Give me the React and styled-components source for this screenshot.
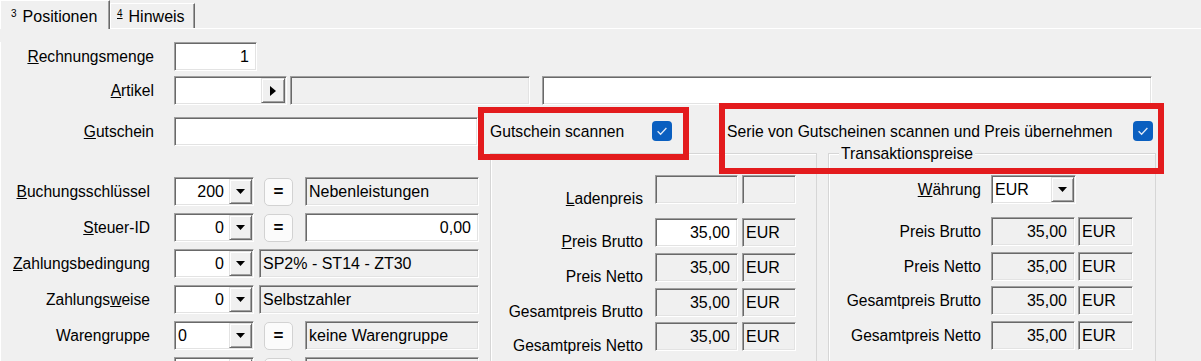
import React from "react";
import styled, { createGlobalStyle, css } from "styled-components";

const Global = createGlobalStyle`
  html, body { margin: 0; padding: 0; background: #f0f0f0; }
  body { font-family: "Liberation Sans", Arial, sans-serif; color: #000; }
  * { box-sizing: border-box; }
`;

const sunken = css`
  border: 1px solid;
  border-color: #a0a0a0 #ffffff #ffffff #a0a0a0;
  box-shadow: inset 1px 1px 0 #696969, inset -1px -1px 0 #e3e3e3;
`;

const raised = css`
  border: 1px solid;
  border-color: #e3e3e3 #696969 #696969 #e3e3e3;
  box-shadow: inset 1px 1px 0 #ffffff, inset -1px -1px 0 #a0a0a0;
  background: #f0f0f0;
`;

const Window = styled.div`
  position: relative;
  width: 1201px;
  height: 361px;
  overflow: hidden;
  background: #f0f0f0;
`;

const TabStrip = styled.div`
  display: flex;
  align-items: flex-end;
  height: 29px;
  border-bottom: 1px solid #ffffff;
`;

const Tab = styled.div`
  width: ${(p) => p.$w}px;
  height: ${(p) => (p.$active ? 29 : 25)}px;
  margin-bottom: ${(p) => (p.$active ? -1 : 0)}px;
  padding: ${(p) => (p.$active ? 4 : 1)}px 0 0 ${(p) => p.$pl}px;
  background: #f0f0f0;
  border-top: 1px solid #ffffff;
  border-left: 1px solid #ffffff;
  border-right: 1px solid #696969;
  box-shadow: inset -1px 0 0 #a0a0a0;
  font-size: 16px;
  line-height: 18px;
  white-space: nowrap;
`;

const Sup = styled.span`
  font-size: 10px;
  vertical-align: 5px;
  margin-right: 6px;
  text-decoration: ${(p) => (p.$u ? "underline" : "none")};
`;

const Panel = styled.div`
  height: 332px;
  border-left: 1px solid #ffffff;
`;

const Row = styled.div`
  display: flex;
  align-items: ${(p) => (p.$top ? "flex-start" : "center")};
  height: 29px;
  margin-top: ${(p) => p.$mt || 0}px;
`;

const Label = styled.div`
  flex: 0 0 ${(p) => p.$w}px;
  width: ${(p) => p.$w}px;
  margin-right: ${(p) => p.$gap}px;
  margin-top: ${(p) => p.$drop || 0}px;
  text-align: right;
  font-size: 15.6px;
  line-height: 18px;
  white-space: nowrap;
`;

const TextBox = styled.div`
  flex: 0 0 ${(p) => p.$w}px;
  width: ${(p) => p.$w}px;
  height: 29px;
  margin-left: ${(p) => p.$ml || 0}px;
  ${sunken};
  background: ${(p) => (p.$ro ? "#f0f0f0" : "#ffffff")};
  display: flex;
  align-items: center;
  justify-content: ${(p) => (p.$right ? "flex-end" : "flex-start")};
  padding: ${(p) => (p.$right ? "0 7px 0 0" : "0 0 0 3px")};
  font-size: 16px;
  white-space: nowrap;
  overflow: hidden;
`;

const ComboBox = styled.div`
  flex: 0 0 ${(p) => p.$w}px;
  width: ${(p) => p.$w}px;
  height: 29px;
  margin-left: ${(p) => p.$ml || 0}px;
  ${sunken};
  background: #ffffff;
  display: flex;
  align-items: center;
  padding: 2px 1px 2px 2px;
  font-size: 16px;
`;

const ComboValue = styled.div`
  flex: 1;
  text-align: ${(p) => (p.$left ? "left" : "right")};
  padding: ${(p) => (p.$left ? "0 0 0 1px" : "0 5px 0 0")};
  white-space: nowrap;
`;

const DropBtn = styled.div`
  flex: 0 0 ${(p) => p.$w || 23}px;
  height: 25px;
  ${raised};
  display: flex;
  align-items: center;
  justify-content: center;
`;

const EqButton = styled.div`
  flex: 0 0 29px;
  height: 28px;
  margin-left: ${(p) => p.$ml}px;
  border: 1px solid #d2d2d2;
  border-radius: 5px;
  background: #fbfbfb;
  display: flex;
  align-items: center;
  justify-content: center;
  font-size: 17px;
  font-weight: bold;
  line-height: 1;
`;

const CheckItem = styled.div`
  flex: 0 0 ${(p) => p.$w}px;
  margin-left: ${(p) => p.$ml}px;
  display: flex;
  align-items: center;
  justify-content: space-between;
  font-size: 15.7px;
  white-space: nowrap;
`;

const CheckBox = styled.div`
  width: 20px;
  height: 20px;
  border-radius: 4px;
  background: #0a5fc0;
  display: flex;
  align-items: center;
  justify-content: center;
  margin-top: -1px;
`;

const Lower = styled.div`
  display: flex;
  align-items: flex-start;
  margin-top: 7px;
`;

const LeftCol = styled.div`
  flex: 0 0 489px;
  padding-top: 24px;
`;

const Group = styled.div`
  position: relative;
  flex: 0 0 ${(p) => p.$w}px;
  height: 240px;
  margin-left: ${(p) => p.$ml || 0}px;
  padding-top: 21px;
  border: 1px solid #d6d6d6;
  box-shadow: inset 1px 1px 0 #ffffff;
`;

const Caption = styled.div`
  position: absolute;
  top: -9px;
  left: 10px;
  padding: 0 2px;
  background: #f0f0f0;
  font-size: 15.7px;
  line-height: 18px;
  white-space: nowrap;
`;

const Annotation = styled.div`
  position: absolute;
  left: ${(p) => p.$x}px;
  top: ${(p) => p.$y}px;
  width: ${(p) => p.$w}px;
  height: ${(p) => p.$h}px;
  border: 6px solid #e31b1d;
  pointer-events: none;
`;

const DownArrow = () => (
  <svg width="9" height="5" viewBox="0 0 9 5">
    <path d="M0 0h9L4.5 5z" fill="#000" />
  </svg>
);

const RightArrow = () => (
  <svg width="6" height="10" viewBox="0 0 6 10">
    <path d="M0 0l6 5-6 5z" fill="#000" />
  </svg>
);

const Check = () => (
  <svg width="12" height="10" viewBox="0 0 12 10">
    <path d="M1.6 5.2l3 3 5.8-6.2" stroke="#dfe9f7" strokeWidth="1.3" fill="none" />
  </svg>
);

const Combo = ({ value, left, w = 80, plain }) => (
  <ComboBox $w={w}>
    <ComboValue $left={left}>{value}</ComboValue>
    <DropBtn>{plain ? null : <DownArrow />}</DropBtn>
  </ComboBox>
);

const leftRows = [
  { label: <><u>B</u>uchungsschlüssel</>, value: "200", eq: "=", text: "Nebenleistungen" },
  { label: <><u>S</u>teuer-ID</>, value: "0", eq: "=", text: "0,00", white: true },
  { label: <><u>Z</u>ahlungsbedingung</>, value: "0", text: "SP2% - ST14 - ZT30" },
  { label: <>Zahlungs<u>w</u>eise</>, value: "0", text: "Selbstzahler" },
  { label: <>Warengruppe</>, value: "0", left: true, eq: "=", text: "keine Warengruppe" },
  { label: null, value: "", eq: " ", text: "", plain: true },
];

const midRows = [
  { label: <><u>L</u>adenpreis</>, mt: 0, v: "", c: "" },
  { label: <><u>P</u>reis Brutto</>, mt: 14, v: "35,00", c: "EUR", white: true },
  { label: "Preis Netto", mt: 6, v: "35,00", c: "EUR" },
  { label: "Gesamtpreis Brutto", mt: 6, v: "35,00", c: "EUR" },
  { label: "Gesamtpreis Netto", mt: 5, v: "35,00", c: "EUR" },
];

const rightRows = [
  { label: "Preis Brutto", mt: 13 },
  { label: "Preis Netto", mt: 6 },
  { label: "Gesamtpreis Brutto", mt: 5 },
  { label: "Gesamtpreis Netto", mt: 6 },
];

export default function App() {
  return (
    <>
      <Global />
      <Window>
        <TabStrip>
          <Tab $active $w={110} $pl={10}>
            <Sup>3</Sup>Positionen
          </Tab>
          <Tab $w={85} $pl={6}>
            <Sup $u>4</Sup>Hinweis
          </Tab>
        </TabStrip>
        <Panel>
          <Row $mt={13}>
            <Label $w={153} $gap={20}>
              <u>R</u>echnungsmenge
            </Label>
            <TextBox $w={83} $right>
              1
            </TextBox>
          </Row>
          <Row $mt={5}>
            <Label $w={153} $gap={20}>
              <u>A</u>rtikel
            </Label>
            <ComboBox $w={113}>
              <ComboValue />
              <DropBtn $w={24}>
                <RightArrow />
              </DropBtn>
            </ComboBox>
            <TextBox $w={240} $ml={3} $ro />
            <TextBox $w={610} $ml={12} />
          </Row>
          <Row $mt={12}>
            <Label $w={153} $gap={20}>
              <u>G</u>utschein
            </Label>
            <TextBox $w={304} />
            <CheckItem $w={182} $ml={12}>
              Gutschein scannen
              <CheckBox>
                <Check />
              </CheckBox>
            </CheckItem>
            <CheckItem $w={426} $ml={55}>
              Serie von Gutscheinen scannen und Preis übernehmen
              <CheckBox>
                <Check />
              </CheckBox>
            </CheckItem>
          </Row>
          <Lower>
            <LeftCol>
              {leftRows.map((r, i) => (
                <Row key={i} $mt={i === 0 ? 0 : 7}>
                  <Label $w={149} $gap={24}>
                    {r.label}
                  </Label>
                  <Combo value={r.value} left={r.left} plain={r.plain} />
                  {r.eq ? (
                    <>
                      <EqButton $ml={10}>{r.eq}</EqButton>
                      <TextBox $w={174} $ml={12} $ro={!r.white} $right={r.white}>
                        {r.text}
                      </TextBox>
                    </>
                  ) : (
                    <TextBox $w={220} $ml={5} $ro>
                      {r.text}
                    </TextBox>
                  )}
                </Row>
              ))}
            </LeftCol>
            <Group $w={327}>
              {midRows.map((r, i) => (
                <Row key={i} $mt={r.mt} $top>
                  <Label $w={152} $gap={12} $drop={15}>
                    {r.label}
                  </Label>
                  <TextBox $w={83} $right $ro={!r.white}>
                    {r.v}
                  </TextBox>
                  <TextBox $w={54} $ml={4} $ro>
                    {r.c}
                  </TextBox>
                </Row>
              ))}
            </Group>
            <Group $w={328} $ml={11}>
              <Caption>Transaktionspreise</Caption>
              <Row>
                <Label $w={152} $gap={10}>
                  <u>W</u>ährung
                </Label>
                <Combo value="EUR" left w={85} />
              </Row>
              {rightRows.map((r, i) => (
                <Row key={i} $mt={r.mt}>
                  <Label $w={152} $gap={10}>
                    {r.label}
                  </Label>
                  <TextBox $w={84} $right $ro>
                    35,00
                  </TextBox>
                  <TextBox $w={55} $ml={3} $ro>
                    EUR
                  </TextBox>
                </Row>
              ))}
            </Group>
          </Lower>
        </Panel>
        <Annotation $x={478} $y={107} $w={211} $h={53} />
        <Annotation $x={719} $y={103} $w={445} $h={71} />
      </Window>
    </>
  );
}
